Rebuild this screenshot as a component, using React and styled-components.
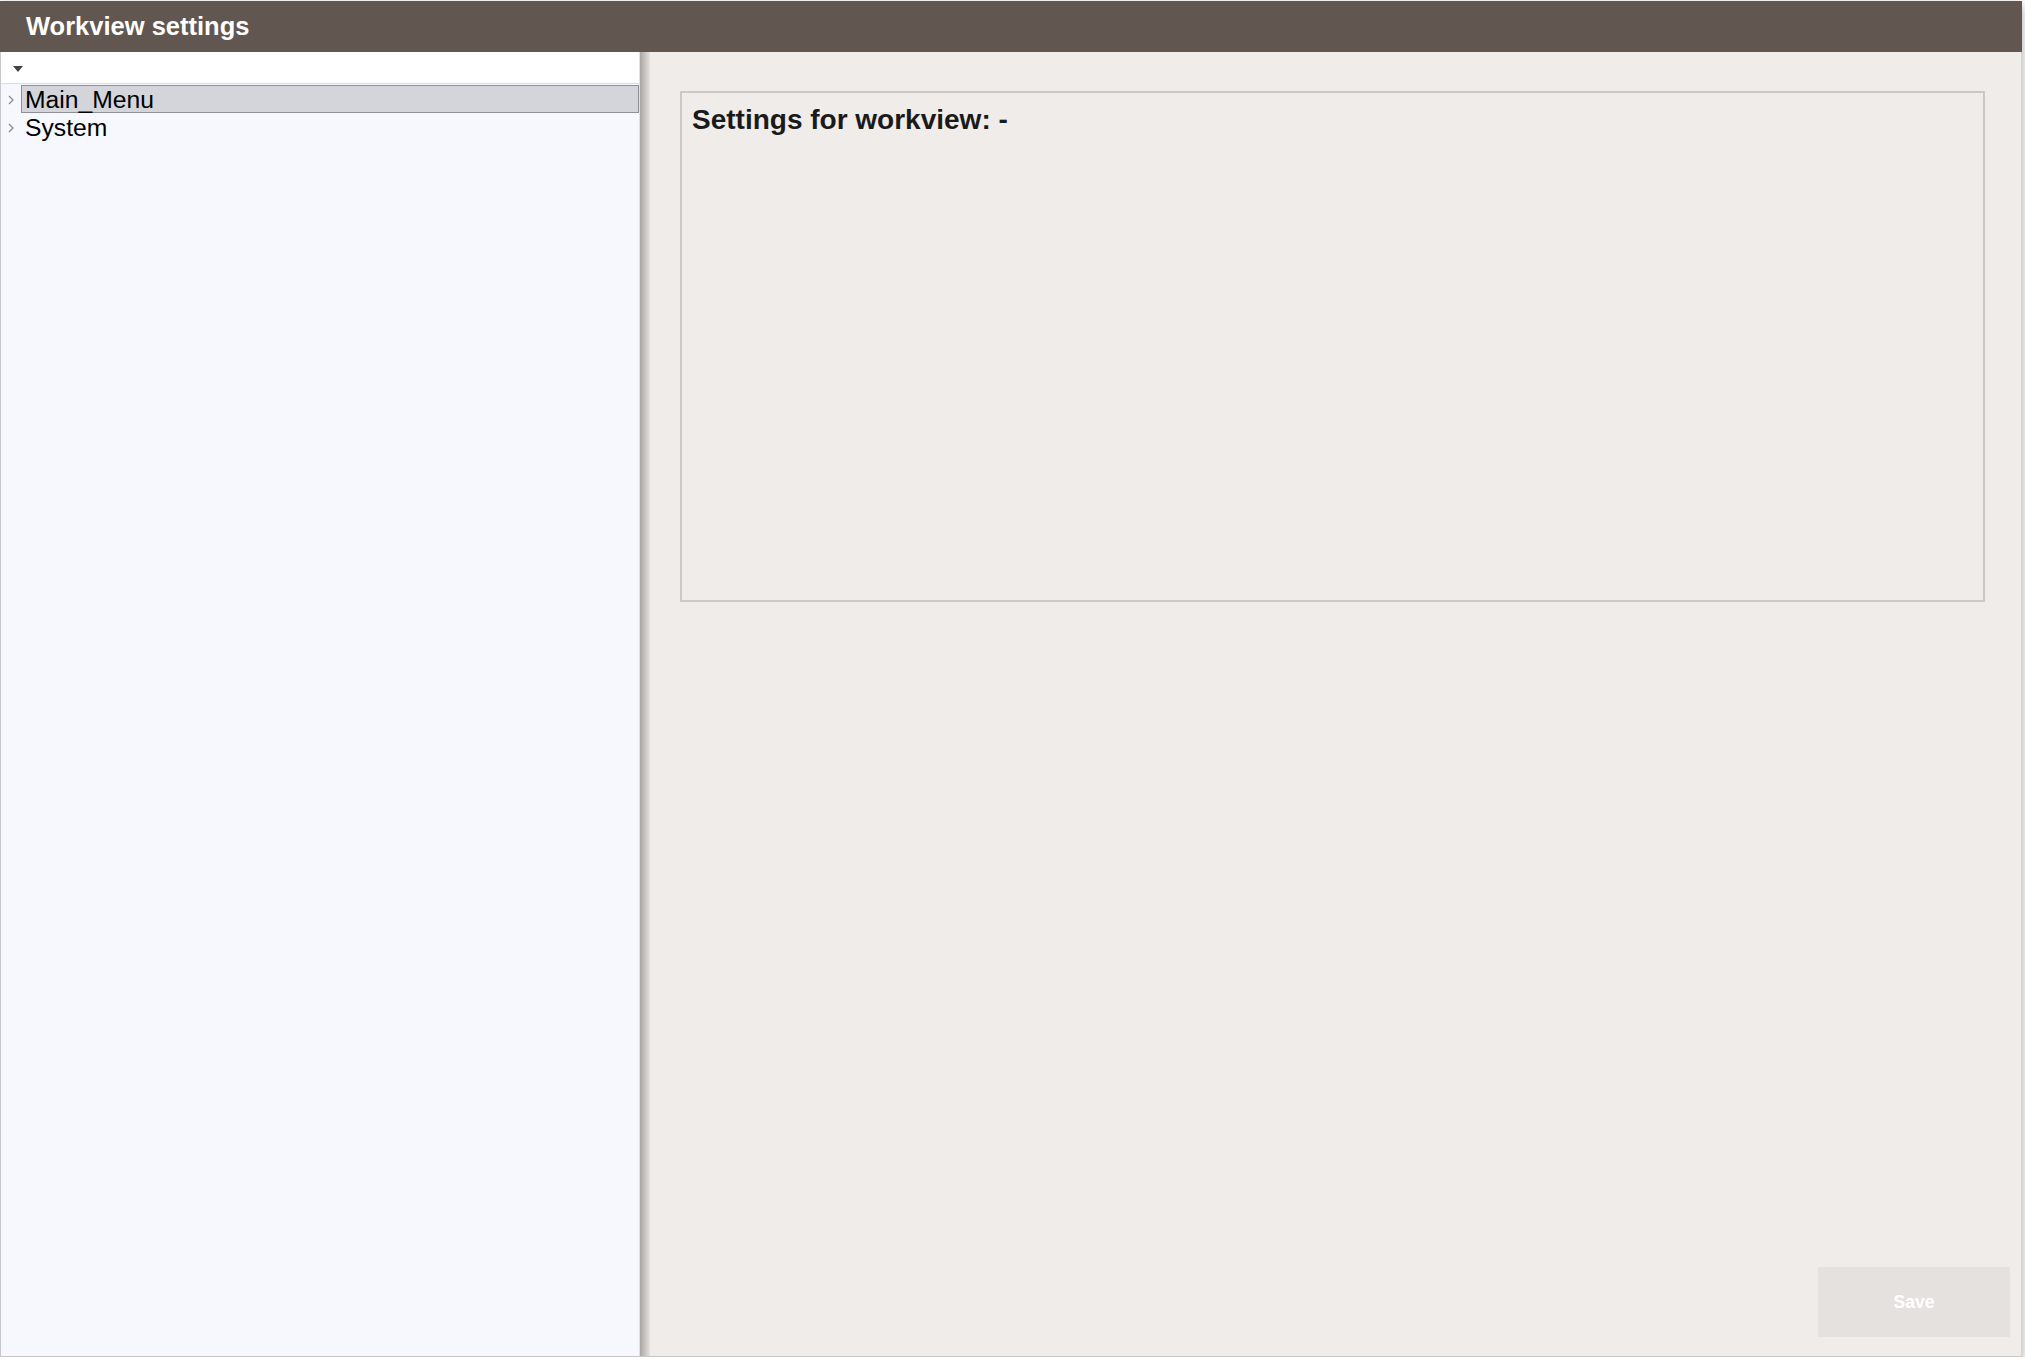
import React from 'react';
import styled, { createGlobalStyle } from 'styled-components';

const GlobalStyle = createGlobalStyle`
  html, body {
    margin: 0;
    padding: 0;
    background: #ffffff;
    font-family: "Liberation Sans", Arial, sans-serif;
  }
`;

const WindowDiv = styled.div`
  width: 2022px;
  height: 1356px;
  margin-top: 1px;
  display: flex;
  flex-direction: column;
  box-shadow: 0 4px 10px rgba(0, 0, 0, 0.35);
  box-sizing: border-box;
`;

const TitleBar = styled.div`
  height: 51px;
  flex: none;
  display: flex;
  align-items: center;
  padding-left: 26px;
  background-color: #625750;
  box-sizing: border-box;
  color: #ffffff;
  font-size: 25.5px;
  font-weight: 700;
`;

const BodyDiv = styled.div`
  flex: 1;
  display: flex;
  min-height: 0;
  border-bottom: 1px solid #c9c7c6;
`;

const TreePane = styled.div`
  width: 640px;
  flex: none;
  display: flex;
  flex-direction: column;
  background-color: #f6f8fd;
  border-left: 1px solid #c6c8cc;
  border-right: 1px solid #e1e2e6;
  box-sizing: border-box;
`;

const Toolbar = styled.div`
  height: 32px;
  flex: none;
  display: flex;
  align-items: center;
  padding-left: 12px;
  background-color: #ffffff;
  border-bottom: 1px solid #dcdcdc;
  box-sizing: border-box;
`;

const DropArrow = styled.span`
  width: 0;
  height: 0;
  border-left: 5px solid transparent;
  border-right: 5px solid transparent;
  border-top: 6px solid #444444;
  margin-top: 2px;
`;

const TreeList = styled.div`
  padding-top: 1px;
  display: flex;
  flex-direction: column;
`;

const TreeRow = styled.div`
  height: 28px;
  display: flex;
  align-items: center;
`;

const Toggle = styled.span`
  width: 20px;
  flex: none;
  display: flex;
  justify-content: flex-start;
  padding-left: 7px;
  padding-top: 1px;
  box-sizing: border-box;
`;

const NodeLabel = styled.div`
  flex: 1;
  height: 28px;
  display: flex;
  align-items: center;
  padding: 2px 0 0 3px;
  font-size: 24.7px;
  color: #000000;
  box-sizing: border-box;
  background-color: ${(p) => (p.selected ? '#d4d5da' : 'transparent')};
  border: 1px solid ${(p) => (p.selected ? '#8f9095' : 'transparent')};
`;

const Splitter = styled.div`
  width: 10px;
  flex: none;
  background: linear-gradient(to right, #a9a6a4 0%, #c4c0bd 45%, #e6e2df 100%);
`;

const ContentPane = styled.div`
  flex: 1;
  display: flex;
  flex-direction: column;
  padding: 39px 11px 19px 30px;
  background-color: #f0ecea;
  border-right: 1px solid #d6d3d1;
  box-sizing: border-box;
`;

const SettingsBox = styled.div`
  height: 511px;
  margin-right: 25px;
  padding: 11px 10px;
  border: 2px solid #cfc8c2;
  box-sizing: border-box;
`;

const SettingsTitle = styled.h2`
  margin: 0;
  font-size: 28px;
  font-weight: 700;
  color: #1a1a1a;
`;

const SaveButton = styled.button`
  margin-top: auto;
  align-self: flex-end;
  width: 192px;
  height: 70px;
  border: none;
  background-color: #e5e1de;
  color: #ffffff;
  font-family: "Liberation Sans", Arial, sans-serif;
  font-size: 17.5px;
  font-weight: 700;
  cursor: default;
`;

function Chevron() {
  return (
    <svg width="6" height="10" viewBox="0 0 6 10">
      <path d="M1 1 L5 5 L1 9" fill="none" stroke="#8a8a8a" strokeWidth="1.3" />
    </svg>
  );
}

const nodes = [
  { id: 'main', name: 'Main_Menu', selected: true },
  { id: 'system', name: 'System', selected: false },
];

export default function App() {
  return (
    <>
      <GlobalStyle />
      <WindowDiv>
        <TitleBar>Workview settings</TitleBar>
        <BodyDiv>
          <TreePane>
            <Toolbar>
              <DropArrow />
            </Toolbar>
            <TreeList>
              {nodes.map((n) => (
                <TreeRow key={n.id}>
                  <Toggle><Chevron /></Toggle>
                  <NodeLabel selected={n.selected}>{n.name}</NodeLabel>
                </TreeRow>
              ))}
            </TreeList>
          </TreePane>
          <Splitter />
          <ContentPane>
            <SettingsBox>
              <SettingsTitle>Settings for workview: -</SettingsTitle>
            </SettingsBox>
            <SaveButton disabled>Save</SaveButton>
          </ContentPane>
        </BodyDiv>
      </WindowDiv>
    </>
  );
}
